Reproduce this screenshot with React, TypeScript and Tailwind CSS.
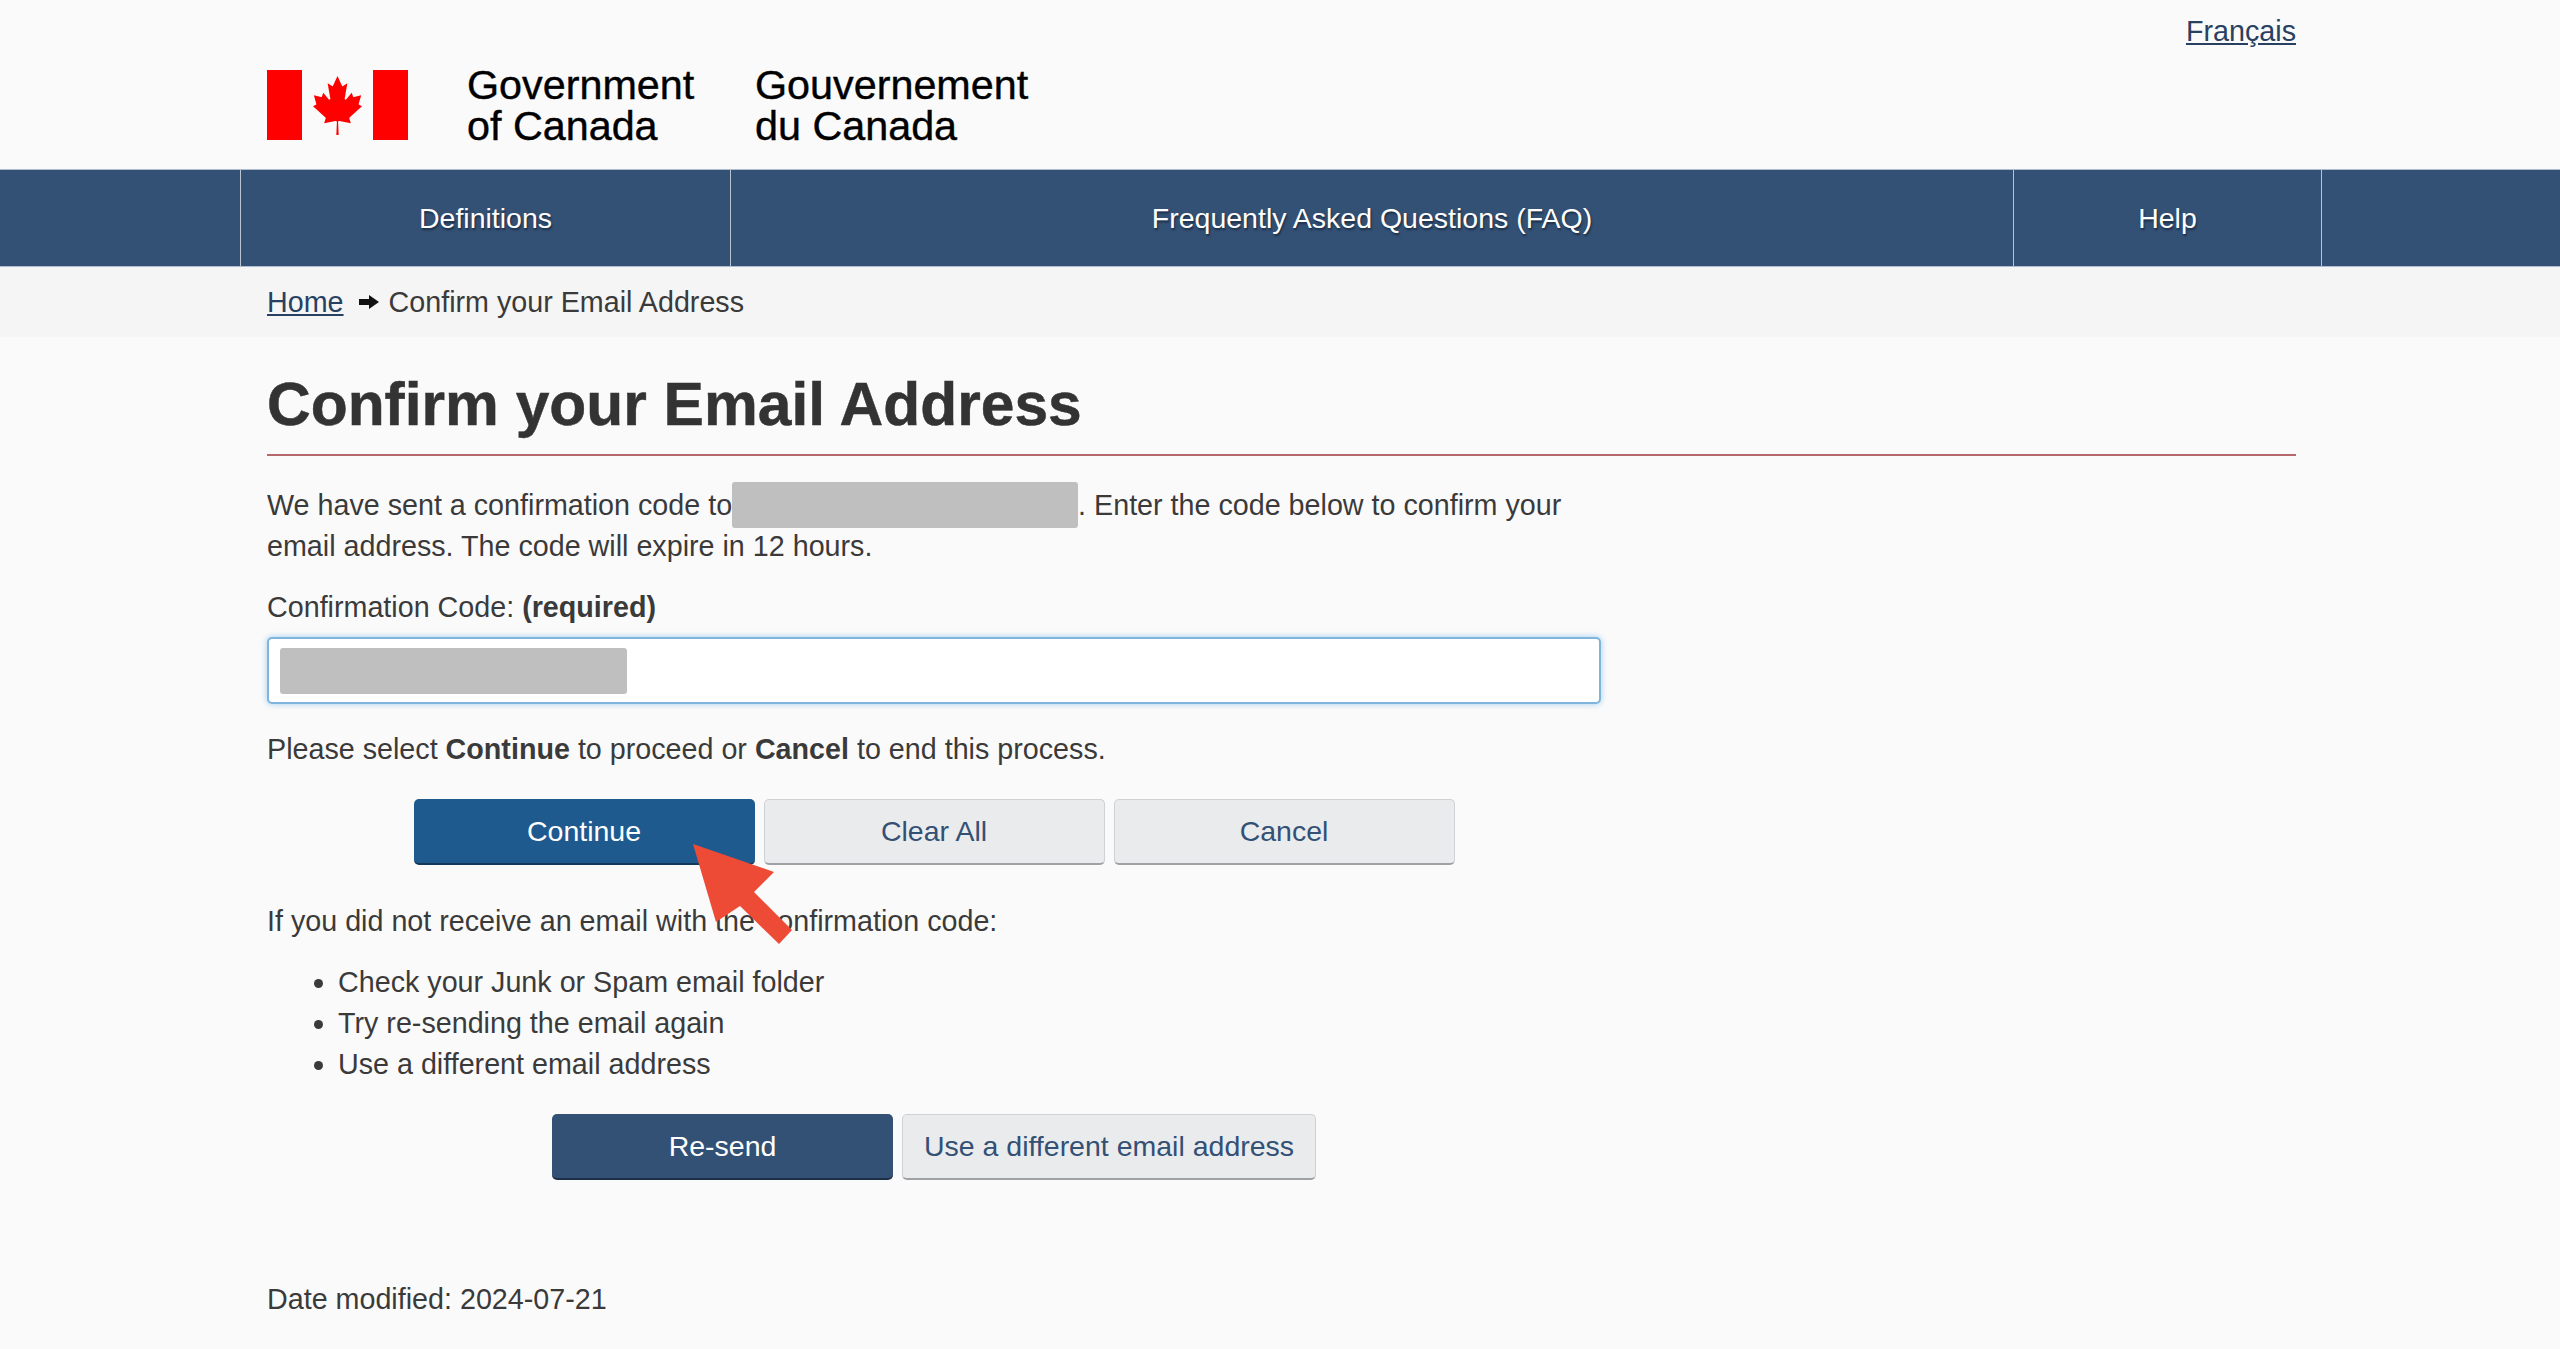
const font = "font-['Liberation_Sans',Arial,sans-serif]";

const NavItem = ({ label, className }: { label: string; className: string }) => (
  <a className={`flex items-center justify-center border-l border-[#b9c4d2] text-[28.5px] text-white [text-shadow:1px_2px_2px_#1c2f46] ${className}`}>
    {label}
  </a>
);

const Redacted = ({ className }: { className: string }) => (
  <span className={`rounded-[3px] bg-[#bfbfbf] ${className}`} />
);

const Flag = () => (
  <div className="flex h-[70px] w-[141px] items-stretch justify-between">
    <div className="w-[35px] bg-[#ff0000]" />
    <svg viewBox="-2015 -2000 4030 4030" preserveAspectRatio="none" className="mt-[6px] h-[59px] w-[53px]">
      <path
        fill="#f00"
        d="m-90 2030 45-863a95 95 0 0 0-111-98l-859 151 116-320a65 65 0 0 0-20-73l-941-762 212-99a65 65 0 0 0 34-79l-186-572 542 115a65 65 0 0 0 73-38l105-247 423 454a65 65 0 0 0 111-57l-204-1052 327 189a65 65 0 0 0 91-27l332-652 332 652a65 65 0 0 0 91 27l327-189-204 1052a65 65 0 0 0 111 57l423-454 105 247a65 65 0 0 0 73 38l542-115-186 572a65 65 0 0 0 34 79l212 99-941 762a65 65 0 0 0-20 73l116 320-859-151a95 95 0 0 0-111 98l45 863z"
      />
    </svg>
    <div className="w-[35px] bg-[#ff0000]" />
  </div>
);

const primary = "h-[66px] rounded-[5px] border-b-2 text-[28.5px] text-white";
const secondary =
  "h-[66px] rounded-[5px] border border-b-2 border-[#cfd1d4] border-b-[#9fa1a4] bg-[#eaebed] text-[28.5px] text-[#335075]";

export default function App() {
  return (
    <div className={`relative min-h-[1349px] bg-[#fafafa] text-[28.7px] leading-[41px] text-[#3a3a3a] ${font}`}>
      <header className="h-[169px] pl-[267px] pr-[264px]">
        <div className="flex justify-end pt-[11px]">
          <a className="text-[#284162] underline">Français</a>
        </div>
        <div className="mt-[18px] flex items-start">
          <Flag />
          <div className="-mt-[5px] ml-[59px] w-[288px] text-[41.3px] leading-[41px] text-black [-webkit-text-stroke:0.4px_black]">
            Government<br />of Canada
          </div>
          <div className="-mt-[5px] text-[41.3px] leading-[41px] text-black [-webkit-text-stroke:0.4px_black]">
            Gouvernement<br />du Canada
          </div>
        </div>
      </header>

      <nav className="flex h-[98px] border-y border-[#aebccd] bg-[#335075] pl-[240px]">
        <NavItem label="Definitions" className="w-[490px]" />
        <NavItem label="Frequently Asked Questions (FAQ)" className="w-[1283px]" />
        <NavItem label="Help" className="w-[308px]" />
        <div className="border-l border-[#b9c4d2]" />
      </nav>

      <div className="flex h-[70px] items-center bg-[#f5f5f5] pl-[267px]">
        <a className="text-[#284162] underline">Home</a>
        <svg viewBox="0 0 20 14" className="ml-[15px] mr-[10px] h-[14px] w-[20px]">
          <path fill="#111" d="M0 4 H10 V0 L20 7 L10 14 V10 H0 Z" />
        </svg>
        <span>Confirm your Email Address</span>
      </div>

      <main className="pl-[267px] pr-[264px]">
        <h1 className="mt-[34px] border-b-2 border-[#b5676c] pb-[16px] text-[60.5px] font-bold leading-[67px] text-[#333] [-webkit-text-stroke:0.5px_#333]">
          Confirm your Email Address
        </h1>

        <div className="w-[1334px]">
          <p className="mt-[29px]">
            We have sent a confirmation code to
            <Redacted className="-mt-[8px] -mb-[4px] inline-block h-[46px] w-[346px] align-middle" />. Enter the code below to confirm your
            <br />
            email address. The code will expire in 12 hours.
          </p>

          <p className="mt-[20px]">
            Confirmation Code: <strong>(required)</strong>
          </p>

          <div className="mt-[9px] flex h-[67px] items-center rounded-[5px] border-2 border-[#7fb5dc] bg-white pl-[11px] shadow-[0_0_6px_rgba(102,175,233,0.6)]">
            <Redacted className="h-[46px] w-[347px]" />
          </div>

          <p className="mt-[25px]">
            Please select <strong>Continue</strong> to proceed or <strong>Cancel</strong> to end this process.
          </p>

          <div className="mt-[29px] flex justify-center gap-[9px]">
            <button className={`${primary} w-[341px] border-[#12395c] bg-[#1f5a8e]`}>Continue</button>
            <button className={`${secondary} w-[341px]`}>Clear All</button>
            <button className={`${secondary} w-[341px]`}>Cancel</button>
          </div>

          <p className="mt-[36px]">If you did not receive an email with the confirmation code:</p>

          <ul className="mt-[20px] list-disc pl-[71px]">
            <li>Check your Junk or Spam email folder</li>
            <li>Try re-sending the email again</li>
            <li>Use a different email address</li>
          </ul>

          <div className="mt-[29px] flex justify-center gap-[9px]">
            <button className={`${primary} w-[341px] border-[#1c2f46] bg-[#335075]`}>Re-send</button>
            <button className={`${secondary} w-[414px]`}>Use a different email address</button>
          </div>
        </div>

        <p className="mt-[99px]">Date modified: 2024-07-21</p>
      </main>

      <svg className="absolute left-[690px] top-[840px] h-[110px] w-[110px]" viewBox="690 840 110 110">
        <path fill="#ee4b37" d="M693 844 L774 872 L754 892 L792 930 L779 944 L740 906 L716 922 Z" />
      </svg>
    </div>
  );
}
